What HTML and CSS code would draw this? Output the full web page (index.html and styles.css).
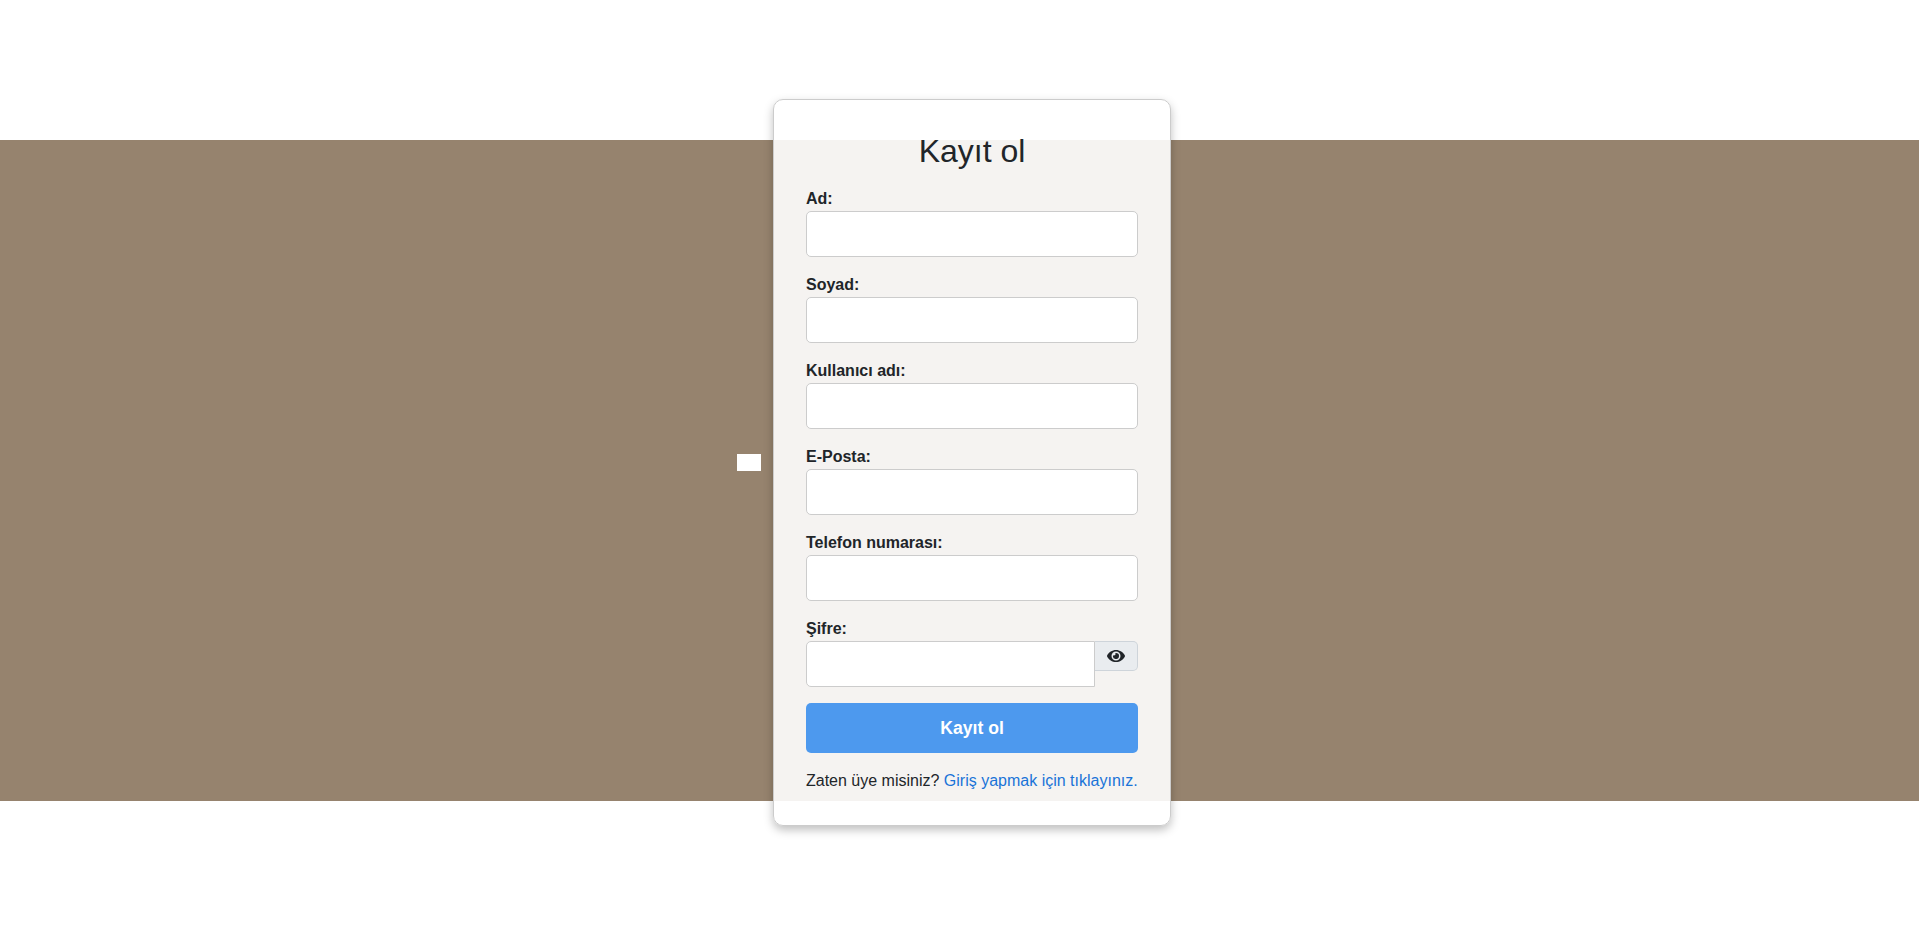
FILE: index.html
```html
<!DOCTYPE html>
<html lang="tr">

<head>
    <meta charset="UTF-8">
    <meta name="viewport" content="width=device-width, initial-scale=1.0">
    <title>Kayıt ol</title>
    <link rel="stylesheet" href="styles.css">
</head>

<body>
    <main class="sayfa">
        <div class="kutu_bos"></div>

        <form class="kart">
            <h1 class="baslik">Kayıt ol</h1>

            <div class="alan">
                <label for="ad">Ad:</label>
                <input class="girdi" id="ad" type="text">
            </div>
            <div class="alan">
                <label for="soyad">Soyad:</label>
                <input class="girdi" id="soyad" type="text">
            </div>
            <div class="alan">
                <label for="kullanici">Kullanıcı adı:</label>
                <input class="girdi" id="kullanici" type="text">
            </div>
            <div class="alan">
                <label for="eposta">E-Posta:</label>
                <input class="girdi" id="eposta" type="email">
            </div>
            <div class="alan">
                <label for="telefon">Telefon numarası:</label>
                <input class="girdi" id="telefon" type="tel">
            </div>
            <div class="alan alan_son">
                <label for="sifre">Şifre:</label>
                <div class="sifre_grup">
                    <input class="girdi girdi_sifre" id="sifre" type="password">
                    <button class="goz" type="button" aria-label="Şifreyi göster">
                        <svg viewBox="0 0 576 512" width="18" height="16" aria-hidden="true">
                            <path fill="currentColor" d="M572.52 241.4C518.29 135.59 410.93 64 288 64S57.68 135.64 3.48 241.41a32.35 32.35 0 0 0 0 29.19C57.71 376.41 165.07 448 288 448s230.32-71.64 284.52-177.41a32.35 32.35 0 0 0 0-29.19zM288 400a144 144 0 1 1 144-144 143.93 143.93 0 0 1-144 144zm0-240a95.31 95.31 0 0 0-25.31 3.79 47.85 47.85 0 0 1-66.9 66.9A95.78 95.78 0 1 0 288 160z"/>
                        </svg>
                    </button>
                </div>
            </div>

            <button class="gonder" type="submit">Kayıt ol</button>

            <p class="alt_yazi">Zaten üye misiniz? <a href="#">Giriş yapmak için tıklayınız.</a></p>
        </form>
    </main>
</body>

</html>
```

FILE: styles.css
```css
* {
    margin: 0;
    padding: 0;
    box-sizing: border-box;
}
body {
    font-family: "Liberation Sans", Arial, sans-serif;
    color: #212529;
    background: #fff;
}
.sayfa {
    display: flex;
    align-items: center;
    gap: 12px;
    height: 938px;
    padding: 99px 0 112px 737px;
    overflow: hidden;
    background: linear-gradient(#96836e, #96836e) 0 140px / 100% 661px no-repeat;
}
.kutu_bos {
    width: 24px;
    height: 17px;
    background: #fff;
}
.kart {
    width: 398px;
    height: 727px;
    padding: 32px 32px 0;
    border: 1px solid #ccc;
    border-radius: 10px;
    background: rgba(255, 255, 255, 0.9);
    box-shadow: 0 4px 10px rgba(0, 0, 0, 0.25);
}
.baslik {
    font-size: 32px;
    font-weight: 400;
    line-height: 38px;
    text-align: center;
    margin-bottom: 19px;
}
.alan {
    margin-bottom: 18px;
}
.alan_son {
    margin-bottom: 16px;
}
.alan label {
    display: block;
    font-size: 16px;
    font-weight: 700;
    line-height: 20px;
    margin-bottom: 2px;
}
.girdi {
    display: block;
    width: 100%;
    height: 46px;
    border: 1px solid #ccc;
    border-radius: 5px;
    background: #fff;
}
.sifre_grup {
    display: flex;
    align-items: flex-start;
}
.girdi_sifre {
    flex: 1;
    min-width: 0;
    border-radius: 5px 0 0 5px;
}
.goz {
    display: flex;
    align-items: center;
    justify-content: center;
    width: 43px;
    height: 30px;
    color: #212529;
    background: #e9ecef;
    border: 1px solid #ced4da;
    border-left: 0;
    border-radius: 0 5px 5px 0;
}
.gonder {
    display: block;
    width: 100%;
    height: 50px;
    border: 0;
    border-radius: 5px;
    background: #4d99ee;
    color: #fff;
    font-family: inherit;
    font-size: 17.6px;
    font-weight: 700;
}
.alt_yazi {
    margin-top: 16px;
    font-size: 16px;
    line-height: 24px;
    white-space: nowrap;
}
.alt_yazi a {
    color: #1a73d8;
    text-decoration: none;
}
```
